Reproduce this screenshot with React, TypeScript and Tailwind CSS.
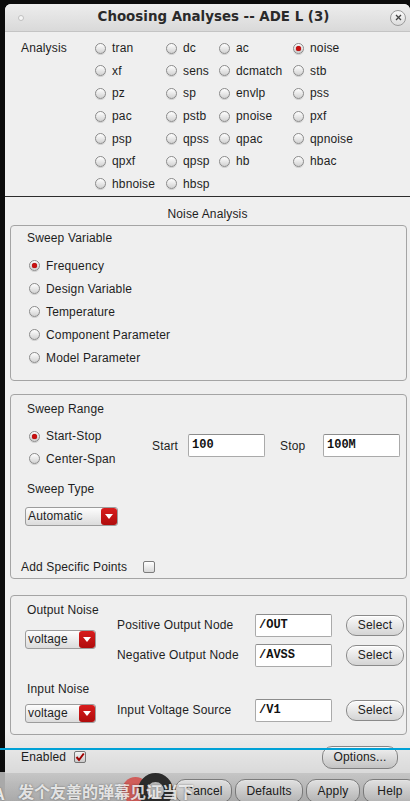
import React from "react"

const analyses: string[][] = [
  ["tran", "dc", "ac", "noise"],
  ["xf", "sens", "dcmatch", "stb"],
  ["pz", "sp", "envlp", "pss"],
  ["pac", "pstb", "pnoise", "pxf"],
  ["psp", "qpss", "qpac", "qpnoise"],
  ["qpxf", "qpsp", "hb", "hbac"],
  ["hbnoise", "hbsp"],
]

const sweepVars = ["Frequency", "Design Variable", "Temperature", "Component Parameter", "Model Parameter"]

function Radio({ checked = false }: { checked?: boolean }) {
  return (
    <span className="flex h-[11px] w-[11px] shrink-0 items-center justify-center rounded-full border border-[#8b8b8b] bg-linear-to-b from-[#ffffff] to-[#d2d2d2] shadow-[0_1px_0_rgba(0,0,0,0.12)]">
      {checked && <span className="h-[5px] w-[5px] rounded-full bg-[#c80f0f] shadow-[0_0_1px_#700]" />}
    </span>
  )
}

function RadioItem({ label, checked = false }: { label: string; checked?: boolean }) {
  return (
    <div className="flex items-center gap-[6px]">
      <Radio checked={checked} />
      <span>{label}</span>
    </div>
  )
}

function Checkbox({ checked = false }: { checked?: boolean }) {
  return (
    <span className="flex h-[12px] w-[12px] shrink-0 items-center justify-center rounded-[2px] border border-[#7c7c7c] bg-linear-to-b from-[#ffffff] to-[#d8d8d8]">
      {checked && (
        <svg width="10" height="10" viewBox="0 0 10 10">
          <path d="M1.5 5 L4 8 L8.8 1.5" fill="none" stroke="#a80000" strokeWidth="2" />
        </svg>
      )}
    </span>
  )
}

function Dropdown({ value, className }: { value: string; className: string }) {
  return (
    <div className={`flex h-[19px] items-stretch rounded-[3px] border border-[#9c9c9c] bg-linear-to-b from-[#fdfdfd] to-[#dcdcdc] ${className}`}>
      <span className="flex-1 pl-[2px] leading-[17px]">{value}</span>
      <span className="flex w-[16px] items-center justify-center rounded-[3px] bg-linear-to-b from-[#d81c1c] to-[#b00c0c]">
        <svg width="8" height="5" viewBox="0 0 8 5">
          <polygon points="0,0 8,0 4,5" fill="#ffffff" />
        </svg>
      </span>
    </div>
  )
}

function Field({ value }: { value: string }) {
  return (
    <div className="h-[23px] w-[77px] shrink-0 rounded-[2px] border border-[#aaaaaa] border-t-[#8c8c8c] bg-white pl-[3px] font-['Liberation_Mono',monospace] text-[12px] font-bold leading-[21px] tracking-normal text-[#111]">
      {value}
    </div>
  )
}

function Pill({ children, className }: { children: React.ReactNode; className: string }) {
  return (
    <div className={`flex shrink-0 items-center justify-center rounded-[10px] border border-[#8a8a8a] bg-linear-to-b from-[#fbfbfb] to-[#d4d4d4] text-[#222] shadow-[inset_0_1px_0_#fff] ${className}`}>
      {children}
    </div>
  )
}

function NodeRow({ label, value, className = "" }: { label: string; value: string; className?: string }) {
  return (
    <div className={`flex h-[30px] items-center ${className}`}>
      <span className="w-[138px]">{label}</span>
      <Field value={value} />
      <Pill className="ml-[14px] h-[21px] w-[58px]">Select</Pill>
    </div>
  )
}

export default function App() {
  return (
    <div className="relative h-[801px] w-[410px] overflow-hidden bg-[#0b0b0b] font-['Liberation_Sans',Arial,sans-serif] text-[12px] tracking-[0.15px] text-[#1e1e1e]">
      <div className="ml-[5px] mt-[4px] flex h-[797px] w-[405px] flex-col overflow-hidden rounded-t-[6px] bg-[#efefef]">
        {/* Title bar */}
        <div className="flex h-[28px] shrink-0 items-center border-b border-[#c4c4c4] bg-linear-to-b from-[#ededed] to-[#d9d9d9] pl-[13px] pr-[4px]">
          <span className="h-[6px] w-[6px] rounded-full border border-[#c0c0c0] bg-[#f6f6f6]" />
          <span className="flex-1 pl-[13px] text-center font-['DejaVu_Sans',sans-serif] text-[13.4px] font-bold tracking-normal text-[#2a2a2a]">
            Choosing Analyses -- ADE L (3)
          </span>
          <span className="flex h-[16px] w-[16px] items-center justify-center rounded-full border border-[#9a9a9a] bg-linear-to-b from-[#fafafa] to-[#dcdcdc]">
            <svg width="7" height="7" viewBox="0 0 7 7">
              <path d="M1 1 L6 6 M6 1 L1 6" stroke="#444" strokeWidth="1.3" />
            </svg>
          </span>
        </div>

        {/* Analysis choices */}
        <div className="flex shrink-0 pl-[16px] pt-[5px]">
          <span className="h-[22.6px] w-[74px] leading-[22.6px]">Analysis</span>
          <div className="grid grid-cols-[71px_53px_74px_1fr] auto-rows-[22.6px]">
            {analyses.map((row) =>
              row.map((a) => <RadioItem key={a} label={a} checked={a === "noise"} />)
            )}
          </div>
        </div>
        <div className="mt-[1px] h-px shrink-0 bg-[#2d2d2d]" />

        <div className="flex h-[28px] shrink-0 items-center justify-center pt-[5px]">Noise Analysis</div>

        {/* Sweep Variable */}
        <div className="ml-[5px] h-[156px] w-[397px] shrink-0 rounded-[4px] border border-[#a4a4a4]">
          <div className="mt-[3px] h-[18px] pl-[16px] leading-[18px]">Sweep Variable</div>
          <div className="mt-[7px] flex flex-col pl-[18px]">
            {sweepVars.map((v, i) => (
              <div key={v} className="flex h-[23px] items-center">
                <RadioItem label={v} checked={i === 0} />
              </div>
            ))}
          </div>
        </div>

        {/* Sweep Range */}
        <div className="ml-[5px] mt-[13px] h-[185px] w-[397px] shrink-0 rounded-[4px] border border-[#a4a4a4]">
          <div className="mt-[5px] h-[18px] pl-[16px] leading-[18px]">Sweep Range</div>
          <div className="mt-[7px] flex">
            <div className="flex w-[141px] flex-col pl-[18px]">
              <div className="flex h-[22.5px] items-center">
                <RadioItem label="Start-Stop" checked />
              </div>
              <div className="flex h-[22.5px] items-center">
                <RadioItem label="Center-Span" />
              </div>
            </div>
            <div className="mt-[9px] flex h-[23px] items-center">
              <span className="w-[36px]">Start</span>
              <Field value="100" />
              <span className="ml-[15px] w-[43px]">Stop</span>
              <Field value="100M" />
            </div>
          </div>
          <div className="mt-[10px] h-[18px] pl-[16px] leading-[18px]">Sweep Type</div>
          <div className="mt-[8.5px] pl-[14px]">
            <Dropdown value="Automatic" className="w-[93px]" />
          </div>
          <div className="mt-[32px] flex h-[18px] items-center pl-[10px]">
            <span className="w-[122px]">Add Specific Points</span>
            <Checkbox />
          </div>
        </div>

        {/* Output / Input noise */}
        <div className="ml-[5px] mt-[16px] flex h-[140px] w-[397px] shrink-0 rounded-[4px] border border-[#a4a4a4]">
          <div className="flex w-[106px] flex-col pl-[14px] pt-[5px]">
            <span className="h-[18px] pl-[2px] leading-[18px]">Output Noise</span>
            <Dropdown value="voltage" className="mt-[11px] w-[71px]" />
            <span className="mt-[31px] h-[18px] pl-[2px] leading-[18px]">Input Noise</span>
            <Dropdown value="voltage" className="mt-[6px] w-[71px]" />
          </div>
          <div className="flex flex-col pt-[14px]">
            <NodeRow label="Positive Output Node" value="/OUT" />
            <NodeRow label="Negative Output Node" value="/AVSS" />
            <NodeRow label="Input Voltage Source" value="/V1" className="mt-[25px]" />
          </div>
        </div>

        {/* Enabled / Options */}
        <div className="mt-[6px] flex h-[32px] shrink-0 items-center pl-[16px] pr-[12px]">
          <span className="w-[53px]">Enabled</span>
          <Checkbox checked />
          <Pill className="ml-auto h-[23px] w-[76px]">Options...</Pill>
        </div>

        {/* Dialog buttons */}
        <div className="flex flex-1 gap-[3px] bg-linear-to-b from-[#d9d9d9] to-[#c6c6c6] pl-[170px] pt-[6px]">
          <Pill className="h-[24px] w-[57px]">Cancel</Pill>
          <Pill className="h-[24px] w-[68px]">Defaults</Pill>
          <Pill className="h-[24px] w-[54px]">Apply</Pill>
          <Pill className="h-[24px] w-[54px]">Help</Pill>
        </div>
      </div>

      {/* video player overlays */}
      <div className="pointer-events-none absolute bottom-0 left-0 h-[70px] w-full bg-linear-to-b from-transparent to-black/15" />
      <div className="absolute left-0 top-[748px] h-[2px] w-full bg-[#00a1d6]" />
      <div className="absolute left-0 top-[772px] h-[29px] w-[5px] bg-[#a9a9a9]" />
      <div className="absolute left-[122px] top-[777px] h-[27px] w-[27px] rounded-full bg-[#d2524f]/90" />
      <div className="absolute left-[138px] top-[773px] h-[35px] w-[35px] rounded-full border-[9px] border-[#2c2c2c] bg-[#b9b9b9]/80" />
      <div className="absolute left-[-6px] top-[781px] font-['Noto_Sans_CJK_SC',sans-serif] text-[16px] font-bold tracking-normal text-white/85 [text-shadow:0_0_2px_rgba(0,0,0,0.45)]">
        A
      </div>
      <div className="absolute left-[18px] top-[781px] font-['Noto_Sans_CJK_SC',sans-serif] text-[16px] font-bold leading-[20px] tracking-normal text-white/80 [text-shadow:0_0_2px_rgba(0,0,0,0.45)]">
        发个友善的弹幕见证当下
      </div>
    </div>
  )
}
